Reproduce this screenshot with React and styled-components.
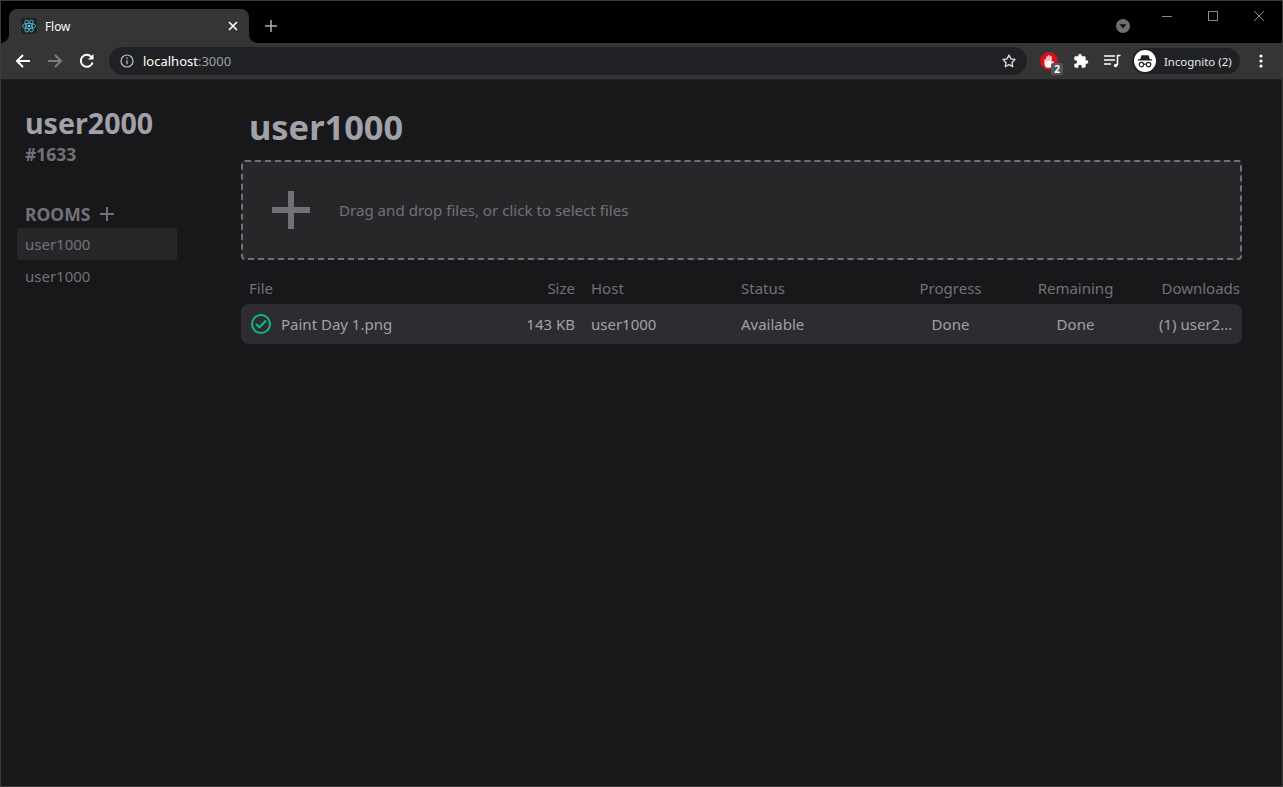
import React from 'react';
import styled, { createGlobalStyle } from 'styled-components';

const GlobalStyle = createGlobalStyle`
  html, body {
    margin: 0;
    height: 100%;
    background: #18181b;
    overflow: hidden;
  }
  #root {
    height: 100%;
  }
  * {
    box-sizing: border-box;
  }
`;

const Window = styled.div`
  display: flex;
  flex-direction: column;
  width: 1283px;
  height: 787px;
  border: 1px solid #3c3c3c;
  font-family: "Noto Sans", "Open Sans", sans-serif;
  color: #a1a1aa;
  overflow: hidden;
`;

/* browser chrome */
const TabStrip = styled.div`
  display: flex;
  align-items: flex-end;
  height: 42px;
  padding-left: 8px;
  background: #000;
  flex-shrink: 0;
  position: relative;
`;

const Tab = styled.div`
  position: relative;
  display: flex;
  align-items: center;
  width: 240px;
  height: 34px;
  padding: 0 11px 0 12px;
  background: #353535;
  border-radius: 8px 8px 0 0;
  font-size: 11.8px;
  color: #fff;

  &::before,
  &::after {
    content: '';
    position: absolute;
    bottom: 0;
    width: 8px;
    height: 8px;
  }

  &::before {
    left: -8px;
    background: radial-gradient(circle at 0 0, #000 7.5px, #353535 8px);
  }

  &::after {
    right: -8px;
    background: radial-gradient(circle at 100% 0, #000 7.5px, #353535 8px);
  }
`;

const TabTitle = styled.span`
  flex: 1;
  margin-left: 8px;
`;

const NewTab = styled.div`
  display: flex;
  align-items: center;
  height: 34px;
  margin-left: 16px;
`;

const DownCircle = styled.svg`
  position: absolute;
  left: 1115px;
  top: 18px;
`;

const WindowControls = styled.div`
  position: absolute;
  right: 0;
  top: 0;
  display: flex;
`;

const WindowButton = styled.div`
  display: flex;
  align-items: center;
  justify-content: center;
  width: 46px;
  height: 29px;
`;

const Toolbar = styled.div`
  display: flex;
  align-items: center;
  height: 36px;
  padding-left: 14px;
  background: #353535;
  flex-shrink: 0;
`;

const NavIcon = styled.svg`
  display: block;
  flex-shrink: 0;
  margin-left: ${(p) => p.$left || 0}px;
  margin-right: ${(p) => p.$gap || 0}px;
`;

const Omnibox = styled.div`
  display: flex;
  align-items: center;
  width: 918px;
  height: 28px;
  margin-left: 14px;
  padding: 0 10px 0 11px;
  background: #202124;
  border-radius: 14px;
  font-size: 13px;
`;

const Url = styled.span`
  flex: 1;
  margin-left: 9px;
  color: #fff;
`;

const Port = styled.span`
  color: #9aa0a6;
`;

const ExtensionSlot = styled.div`
  position: relative;
  width: 18px;
  height: 18px;
  margin-left: 13px;
  margin-right: 15px;
`;

const Badge = styled.span`
  position: absolute;
  right: -5px;
  bottom: -5px;
  width: 12px;
  height: 12px;
  background: #555;
  border-radius: 2px;
  color: #fff;
  font-weight: 700;
  font-size: 10px;
  line-height: 12px;
  text-align: center;
`;

const Profile = styled.div`
  display: flex;
  align-items: center;
  width: 108px;
  height: 26px;
  margin-left: 11px;
  padding-left: 2px;
  background: #202124;
  border-radius: 13px;
  font-size: 11.4px;
  color: #e8eaed;
  white-space: nowrap;
`;

const Avatar = styled.div`
  display: flex;
  align-items: center;
  justify-content: center;
  width: 22px;
  height: 22px;
  margin-right: 8px;
  background: #fff;
  border-radius: 50%;
`;

const ShadowLine = styled.div`
  height: 1px;
  background: #1f1f1f;
  flex-shrink: 0;
`;

/* app */
const Page = styled.div`
  flex: 1;
  display: flex;
  background: #18181b;
`;

const Sidebar = styled.aside`
  width: 240px;
  padding: 23px 16px 0;
  flex-shrink: 0;
`;

const UserName = styled.div`
  padding-left: 8px;
  font-size: 28.6px;
  line-height: 40px;
  font-weight: 700;
  color: #a1a1aa;
`;

const UserTag = styled.div`
  padding-left: 8px;
  font-size: 17.5px;
  line-height: 22px;
  font-weight: 700;
  color: #71717a;
`;

const RoomsHeader = styled.div`
  display: flex;
  align-items: center;
  gap: 10px;
  height: 24px;
  margin: 37px 0 2px;
  padding-left: 8px;
  font-size: 17.5px;
  font-weight: 700;
  color: #71717a;
`;

const RoomRow = styled.div`
  display: flex;
  align-items: center;
  width: 160px;
  height: 32px;
  padding-left: 8px;
  border-radius: 3px;
  font-size: 15px;
  color: #71717a;
  background: ${(p) => (p.$active ? '#27272a' : 'transparent')};
`;

const Main = styled.main`
  flex: 1;
  padding: 24px 40px 0 0;
`;

const RoomTitle = styled.h1`
  margin: 0 0 10px;
  padding-left: 8px;
  font-size: 34.4px;
  line-height: 46px;
  font-weight: 700;
  color: #a1a1aa;
`;

const DropZone = styled.div`
  display: flex;
  align-items: center;
  height: 100px;
  padding-left: 29px;
  background: #27272a;
  border: 2px dashed #71717a;
  border-radius: 4px;
  font-size: 15.1px;
  color: #71717a;
`;

const DropText = styled.span`
  margin-left: 29px;
`;

const columns = `
  display: grid;
  grid-template-columns: 270px 64px 16px 134px 16px 147px 125px 125px 1fr;
`;

const HeaderRow = styled.div`
  ${columns}
  height: 44px;
  align-items: end;
  padding-bottom: 6px;
  font-size: 15px;
  color: #71717a;
`;

const FileRow = styled.div`
  ${columns}
  height: 40px;
  align-items: center;
  background: #2c2c31;
  border-radius: 8px;
  font-size: 15px;
  color: #a1a1aa;
`;

const Cell = styled.div`
  grid-column: ${(p) => p.$col};
  text-align: ${(p) => p.$align || 'left'};
  padding-left: ${(p) => p.$pad || 0}px;
  padding-right: ${(p) => p.$padRight || 0}px;
  white-space: nowrap;
`;

const FileName = styled(Cell)`
  display: flex;
  align-items: center;
  gap: 8px;
  padding-left: 8px;
`;

function ReactLogo() {
  return (
    <svg width="16" height="16" viewBox="-12 -12 24 24" fill="none" stroke="#61dafb" strokeWidth="1">
      <rect x="-12" y="-12" width="24" height="24" rx="3" fill="#20232a" stroke="none" />
      <circle r="2" fill="#61dafb" stroke="none" />
      <ellipse rx="10" ry="4" />
      <ellipse rx="10" ry="4" transform="rotate(60)" />
      <ellipse rx="10" ry="4" transform="rotate(120)" />
    </svg>
  );
}

export default function App() {
  return (
    <>
      <GlobalStyle />
      <Window>
        <TabStrip>
          <Tab>
            <ReactLogo />
            <TabTitle>Flow</TabTitle>
            <svg width="10" height="10" viewBox="0 0 10 10" stroke="#fff" strokeWidth="1.6">
              <path d="M1 1l8 8M9 1l-8 8" />
            </svg>
          </Tab>
          <NewTab>
            <svg width="12" height="12" viewBox="0 0 12 12" stroke="#b0b0b0" strokeWidth="1.5">
              <path d="M6 0v12M0 6h12" />
            </svg>
          </NewTab>
          <DownCircle width="14" height="14" viewBox="0 0 14 14">
            <circle cx="7" cy="7" r="7" fill="#6e6e6e" />
            <path d="M3.5 5.2h7L7 9.6z" fill="#111" />
          </DownCircle>
          <WindowControls>
            <WindowButton>
              <svg width="10" height="10" viewBox="0 0 10 10" stroke="#8a8a8a"><path d="M0 5.5h10" /></svg>
            </WindowButton>
            <WindowButton>
              <svg width="10" height="10" viewBox="0 0 10 10" fill="none" stroke="#8a8a8a"><rect x=".5" y=".5" width="9" height="9" /></svg>
            </WindowButton>
            <WindowButton>
              <svg width="10" height="10" viewBox="0 0 10 10" stroke="#8a8a8a"><path d="M0 0l10 10M10 0L0 10" /></svg>
            </WindowButton>
          </WindowControls>
        </TabStrip>
        <Toolbar>
          <NavIcon width="16" height="16" viewBox="0 0 16 16" fill="none" stroke="#fff" strokeWidth="2" $gap={16}>
            <path d="M15 8H2M8 2L2 8l6 6" />
          </NavIcon>
          <NavIcon width="16" height="16" viewBox="0 0 16 16" fill="none" stroke="#7d7d7d" strokeWidth="2" $gap={16}>
            <path d="M1 8h13M8 2l6 6-6 6" />
          </NavIcon>
          <NavIcon width="16" height="16" viewBox="0 0 16 16" fill="none" stroke="#fff" strokeWidth="2">
            <path d="M13.6 9.5A6 6 0 1 1 12.3 3.8" />
            <path d="M14.5 1v5.5H9z" fill="#fff" stroke="none" />
          </NavIcon>
          <Omnibox>
            <svg width="14" height="14" viewBox="0 0 14 14" fill="none" stroke="#bdc1c6" strokeWidth="1.2">
              <circle cx="7" cy="7" r="6" />
              <path d="M7 6.2v4M7 3.6v1.4" />
            </svg>
            <Url>localhost<Port>:3000</Port></Url>
            <svg width="16" height="16" viewBox="0 0 24 24" fill="none" stroke="#dcdcdc" strokeWidth="2" strokeLinejoin="round">
              <path d="M12 3l2.8 5.8 6.2.9-4.5 4.4 1.1 6.3L12 17.4l-5.6 3 1.1-6.3L3 9.7l6.2-.9z" />
            </svg>
          </Omnibox>
          <ExtensionSlot>
            <svg width="18" height="18" viewBox="0 0 18 18">
              <path d="M5.5.5h7l5 5v7l-5 5h-7l-5-5v-7z" fill="#e0101a" />
              <path d="M4.5 11.500V7.300h1.300v2.200h.6V4.500h1.400v4.200h.5V3.200h1.400v5.500h.5V4.200h1.400v6.300c0 .3.200.3.300.1l.9-1.500 1.100.6-1.500 4c-.5 1.300-1.600 2-3.100 2H8c-2.300 0-3.500-1.500-3.500-4.200z" fill="#fff" />
            </svg>
            <Badge>2</Badge>
          </ExtensionSlot>
          <NavIcon width="16" height="16" viewBox="0 0 24 24" fill="#fff" $gap={15}>
            <path d="M20.5 11H19V7c0-1.100-.9-2-2-2h-4V3.500a2.500 2.500 0 0 0-5 0V5H4c-1.100 0-2 .9-2 2v3.800h1.500a2.700 2.700 0 0 1 0 5.400H2V20c0 1.100.9 2 2 2h3.800v-1.500a2.700 2.700 0 0 1 5.400 0V22H17c1.100 0 2-.9 2-2v-4h1.500a2.500 2.500 0 0 0 0-5z" />
          </NavIcon>
          <NavIcon width="17" height="16" viewBox="0 0 17 16" fill="none" stroke="#fff" strokeWidth="1.5">
            <path d="M0 3h11M0 7h11M0 11h7" />
            <path d="M13.5 12V2.500h3" />
            <circle cx="11.700" cy="12.500" r="1.800" fill="#fff" stroke="none" />
          </NavIcon>
          <Profile>
            <Avatar>
              <svg width="16" height="13" viewBox="0 0 18 14" fill="#202124">
                <path d="M5 0h8l1.500 4.500H17V6H1V4.500h2.500z" />
                <circle cx="5" cy="10.500" r="2.500" fill="none" stroke="#202124" strokeWidth="1.300" />
                <circle cx="13" cy="10.500" r="2.500" fill="none" stroke="#202124" strokeWidth="1.300" />
                <path d="M7.500 10h3" stroke="#202124" strokeWidth="1.300" />
              </svg>
            </Avatar>
            Incognito (2)
          </Profile>
          <NavIcon width="4" height="14" viewBox="0 0 4 14" fill="#fff" $left={19}>
            <circle cx="2" cy="2" r="1.600" />
            <circle cx="2" cy="7" r="1.600" />
            <circle cx="2" cy="12" r="1.600" />
          </NavIcon>
        </Toolbar>
        <ShadowLine />
        <Page>
          <Sidebar>
            <UserName>user2000</UserName>
            <UserTag>#1633</UserTag>
            <RoomsHeader>
              ROOMS
              <svg width="14" height="14" viewBox="0 0 14 14" stroke="#71717a" strokeWidth="2">
                <path d="M7 0v14M0 7h14" />
              </svg>
            </RoomsHeader>
            <RoomRow $active>user1000</RoomRow>
            <RoomRow>user1000</RoomRow>
          </Sidebar>
          <Main>
            <RoomTitle>user1000</RoomTitle>
            <DropZone>
              <svg width="38" height="38" viewBox="0 0 38 38" stroke="#71717a" strokeWidth="6">
                <path d="M19 0v38M0 19h38" />
              </svg>
              <DropText>Drag and drop files, or click to select files</DropText>
            </DropZone>
            <HeaderRow>
              <Cell $col={1} $pad={8}>File</Cell>
              <Cell $col={2} $align="right">Size</Cell>
              <Cell $col={4}>Host</Cell>
              <Cell $col={6}>Status</Cell>
              <Cell $col={7} $align="center">Progress</Cell>
              <Cell $col={8} $align="center">Remaining</Cell>
              <Cell $col={9} $align="right" $padRight={2}>Downloads</Cell>
            </HeaderRow>
            <FileRow>
              <FileName $col={1}>
                <svg width="24" height="24" viewBox="0 0 24 24" fill="none" stroke="#10b981" strokeWidth="2" strokeLinecap="round" strokeLinejoin="round">
                  <path d="M7.500 12.500l3 3 6-6.500M21 12a9 9 0 1 1-18 0 9 9 0 0 1 18 0z" />
                </svg>
                Paint Day 1.png
              </FileName>
              <Cell $col={2} $align="right">143 KB</Cell>
              <Cell $col={4}>user1000</Cell>
              <Cell $col={6}>Available</Cell>
              <Cell $col={7} $align="center">Done</Cell>
              <Cell $col={8} $align="center">Done</Cell>
              <Cell $col={9} $pad={21}>(1) user2...</Cell>
            </FileRow>
          </Main>
        </Page>
      </Window>
    </>
  );
}
